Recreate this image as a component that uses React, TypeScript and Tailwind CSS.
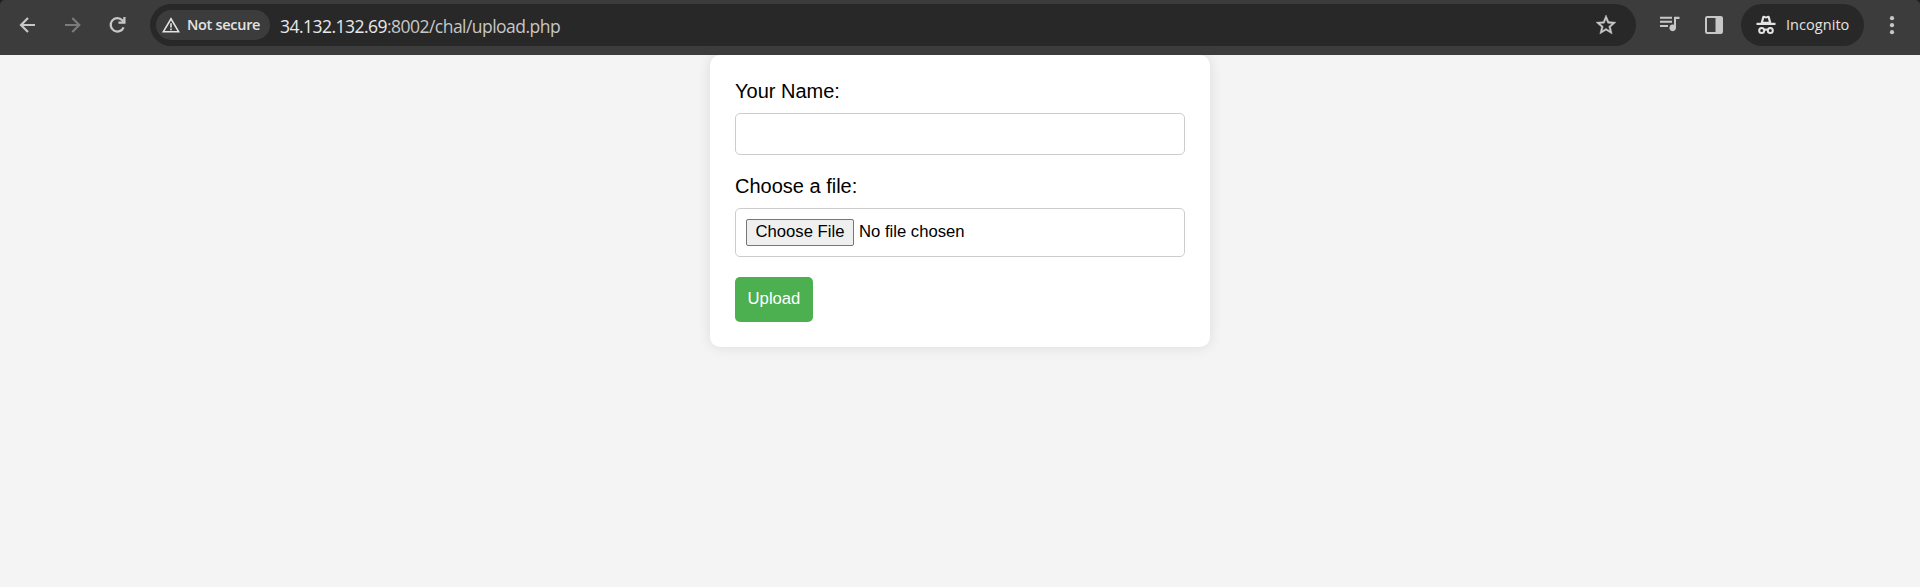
import React from 'react';

const stroke = { fill: 'none', stroke: 'currentColor' } as const;

function BackIcon() {
  return (
    <svg width="20" height="20" viewBox="0 0 20 20" {...stroke} strokeWidth="2.2">
      <path d="M17 10H3.500M10 3L3 10l7 7" />
    </svg>
  );
}

function ForwardIcon() {
  return (
    <svg width="20" height="20" viewBox="0 0 20 20" {...stroke} strokeWidth="2.2">
      <path d="M2 10h14M9.300 3l7 7-7 7" />
    </svg>
  );
}

function ReloadIcon() {
  return (
    <svg width="20" height="20" viewBox="0 0 20 20" {...stroke} strokeWidth="2.3">
      <path d="M15.600 12.300a6.700 6.700 0 1 1-1.300-7l1.600 1.700" />
      <path d="M16.400 2v5.700h-6" />
    </svg>
  );
}

function WarningIcon() {
  return (
    <svg width="18" height="16" viewBox="0 0 18 16" {...stroke} strokeWidth="1.6">
      <path d="M1.4 14.7L9 1.900l7.600 12.800z" />
      <path d="M9 6.300v4.200M9 11.500v1.700" />
    </svg>
  );
}

function StarIcon() {
  return (
    <svg width="24" height="24" viewBox="0 0 24 24" fill="currentColor" stroke="currentColor" strokeWidth="0.4">
      <path d="M22 9.24l-7.19-.62L12 2 9.19 8.63 2 9.24l5.46 4.73L5.82 21 12 17.27 18.18 21l-1.63-7.03L22 9.24zM12 15.4l-3.76 2.27 1-4.28-3.32-2.88 4.38-.38L12 6.1l1.71 4.04 4.38.38-3.32 2.88 1 4.28L12 15.4z" />
    </svg>
  );
}

function MediaIcon() {
  return (
    <svg width="20" height="16" viewBox="0 0 20 16" fill="currentColor">
      <path d="M0 .8h12v2H0zM0 4.800h12v2H0zM0 8.900h8v2H0z" />
      <path d="M14 .8h5.500v2.300H16v8.700a3.300 3.300 0 1 1-2-3z" />
    </svg>
  );
}

function PanelIcon() {
  return (
    <svg width="18" height="18" viewBox="0 0 18 18">
      <rect x="1" y="1" width="16" height="16" rx="1.2" {...stroke} strokeWidth="2" />
      <path d="M10.500 1H17v16h-6.500z" fill="currentColor" />
    </svg>
  );
}

function IncognitoIcon() {
  return (
    <svg width="20" height="20" viewBox="0 0 20 20">
      <path d="M4.600 8L6.200 2Q6.600.4 8 .8L10 1.500 12 .8Q13.400.4 13.800 2L15.400 8z" fill="currentColor" />
      <path d="M7.200 6.800L8.200 3l1.800.6L11.800 3l1 3.800z" fill="#282828" />
      <path d="M.5 7.800h19V10H.5z" fill="currentColor" />
      <g {...stroke} strokeWidth="2">
        <circle cx="5.700" cy="15.400" r="2.500" />
        <circle cx="14.300" cy="15.400" r="2.500" />
        <path d="M8 15.100q2-1.300 4 0" />
      </g>
    </svg>
  );
}

function MenuIcon() {
  return (
    <svg width="6" height="20" viewBox="0 0 6 20" fill="currentColor">
      <circle cx="3" cy="3.200" r="2.100" />
      <circle cx="3" cy="10.200" r="2.100" />
      <circle cx="3" cy="17.200" r="2.100" />
    </svg>
  );
}

function Toolbar() {
  return (
    <header className="relative z-10 bg-[#202020]">
      <div className="flex h-[55px] items-start rounded-t-[5px] bg-[#3c3c3c] pt-[4px] font-['Open_Sans',sans-serif] text-[#c7c7c7]">
        <div className="flex h-[42px] w-[150px] shrink-0 items-center gap-[25px] pl-[18px]">
          <BackIcon />
          <span className="text-[#7b7b7b]"><ForwardIcon /></span>
          <ReloadIcon />
        </div>
        <div className="flex h-[42px] w-[1486px] shrink-0 items-center rounded-full bg-[#282828] pl-[6px] pr-[18px]">
          <div className="flex h-[30px] w-[114px] shrink-0 items-center rounded-full bg-[#3c3c3c] pl-[6px] text-[#e3e3e3]">
            <WarningIcon />
            <span className="ml-[7px] whitespace-nowrap text-[14.500px] font-semibold leading-5 tracking-[-0.3px]">Not secure</span>
          </div>
          <div className="ml-[10px] mt-px whitespace-nowrap text-[17.500px] leading-6 tracking-[-0.53px] text-[#c7c7c7]">
            <span className="text-[#e8e8e8]">34.132.132.69</span>:8002/chal/upload.php
          </div>
          <div className="ml-auto"><StarIcon /></div>
        </div>
        <div className="flex h-[42px] flex-1 items-center pl-6">
          <div className="-mt-[3px]"><MediaIcon /></div>
          <div className="ml-[25px]"><PanelIcon /></div>
          <div className="ml-[18px] flex h-[42px] w-[123px] items-center rounded-full bg-[#282828] pl-[15px] text-[#e3e3e3]">
            <IncognitoIcon />
            <span className="ml-[10px] text-[14.500px] leading-5 tracking-[0.05px]">Incognito</span>
          </div>
          <div className="ml-[25px]"><MenuIcon /></div>
        </div>
      </div>
    </header>
  );
}

function UploadForm() {
  return (
    <form
      className="mx-auto h-[292px] w-[500px] rounded-[10px] bg-white px-[25px] pt-[25px] shadow-[0_0_12.500px_rgba(0,0,0,0.1)]"
      onSubmit={(event) => event.preventDefault()}
    >
      <label htmlFor="name" className="block text-[20px] leading-[23px]">Your Name:</label>
      <input id="name" type="text" className="mt-[10px] block h-[42px] w-full rounded-[5px] border border-[#ccc] bg-white px-[10px] text-[16.667px]" />
      <label htmlFor="file" className="mt-5 block text-[20px] leading-[23px]">Choose a file:</label>
      <div className="mt-[10px] flex h-[49px] w-full items-start rounded-[5px] border border-[#ccc] pl-[10px] pt-[10px] text-[16.667px]">
        <button id="file" type="button" className="h-[27px] w-[108px] shrink-0 whitespace-nowrap rounded-[2px] border border-[#767676] bg-[#efefef] pb-[2px] text-center leading-[23px]">Choose File</button>
        <span className="ml-[5px] leading-[26px]">No file chosen</span>
      </div>
      <button type="submit" className="mt-5 block h-[45px] w-[78px] rounded-[5px] bg-[#4caf50] pb-[2px] text-center text-[16.667px] leading-5 text-white">Upload</button>
    </form>
  );
}

export default function App() {
  return (
    <div className="min-h-[587px] bg-[#f4f4f4] font-['Liberation_Sans',Arial,sans-serif] text-black">
      <Toolbar />
      <UploadForm />
    </div>
  );
}
